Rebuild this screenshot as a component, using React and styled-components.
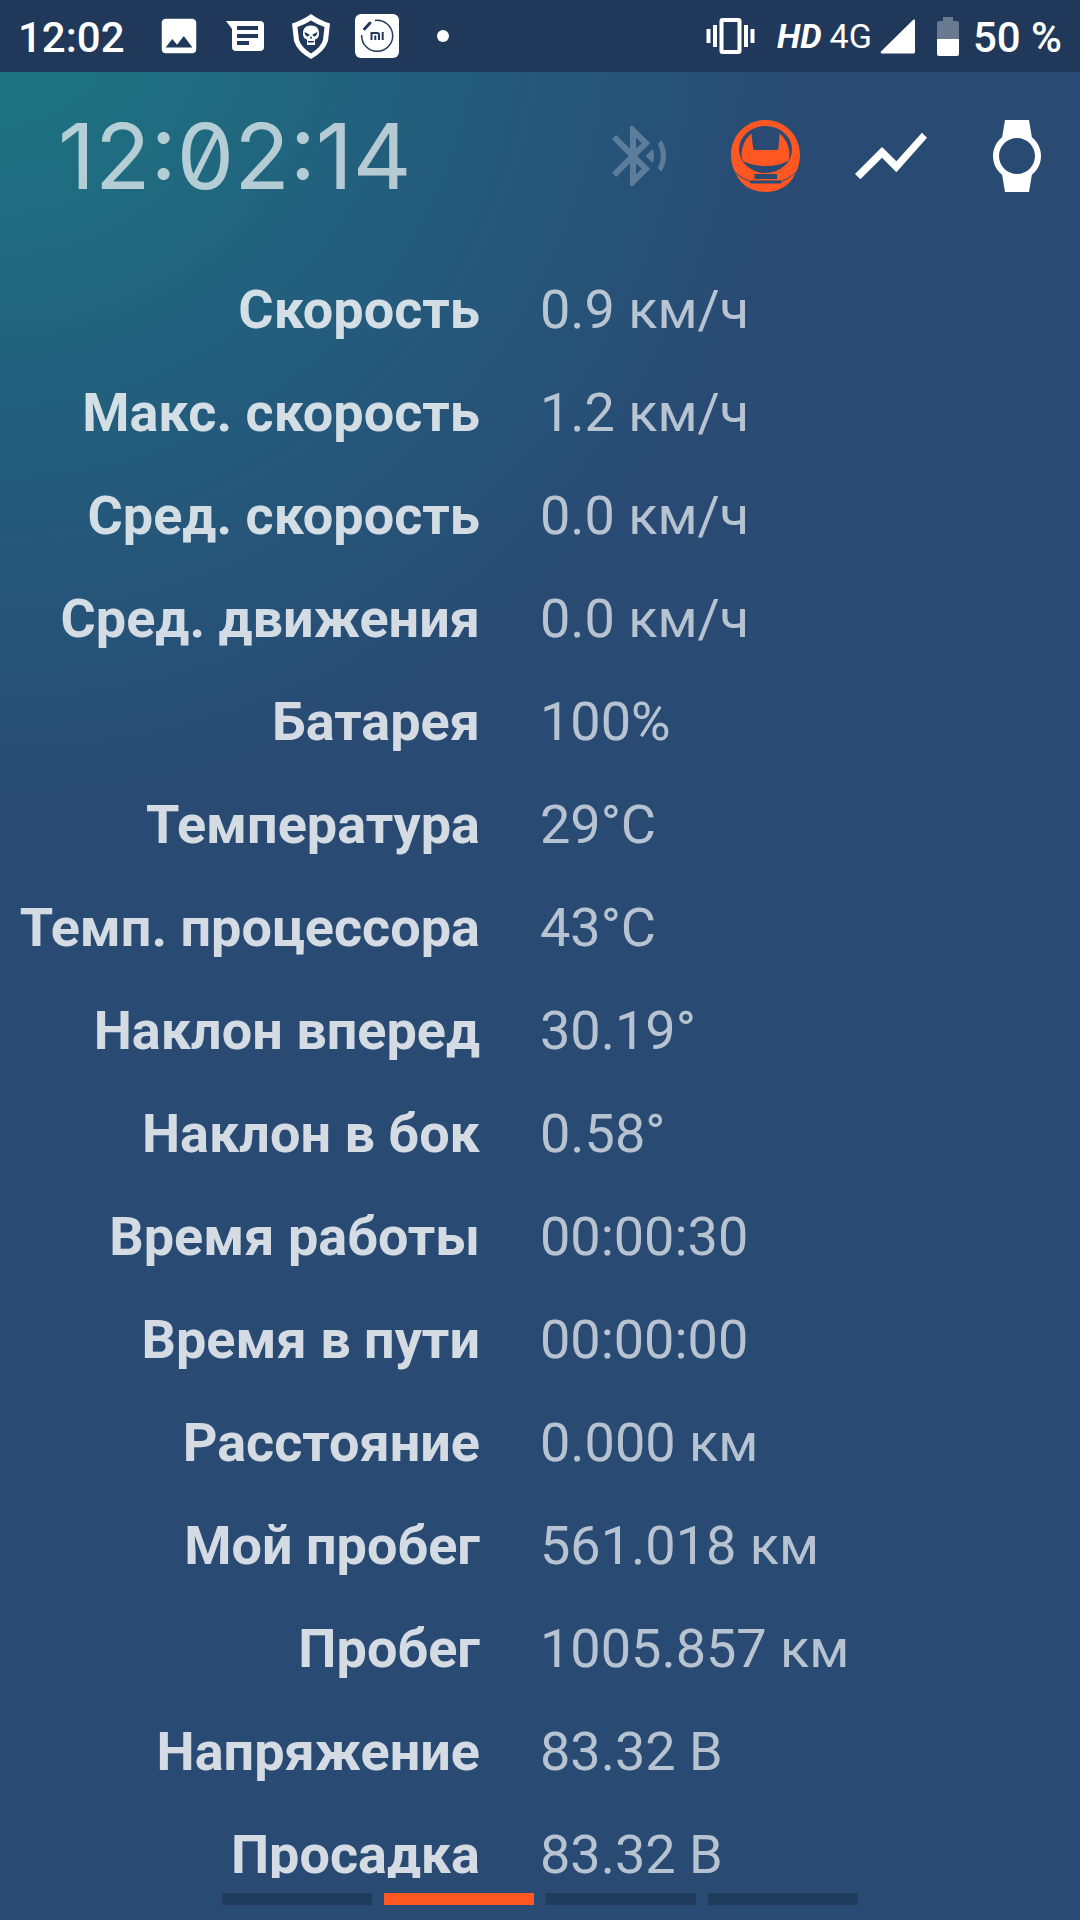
import React, { useState } from "react";
import styled, { createGlobalStyle } from "styled-components";

const GlobalStyle = createGlobalStyle`
  * {
    box-sizing: border-box;
  }
  body {
    margin: 0;
    background-color: #294b73;
    font-family: Roboto, "Liberation Sans", sans-serif;
  }
`;

const Screen = styled.div`
  display: flex;
  flex-direction: column;
  height: 100vh;
  overflow: hidden;
`;

const StatusBar = styled.header`
  display: flex;
  align-items: center;
  justify-content: space-between;
  height: 72px;
  flex-shrink: 0;
  padding: 0 18px;
  background-color: #20395a;
  color: #fff;
`;

const StatusGroup = styled.div`
  display: flex;
  align-items: center;
  gap: ${({ $gap }) => $gap}px;
`;

const StatusText = styled.span`
  padding-top: 3px;
  font-size: 42px;
  font-weight: 500;
  line-height: 48px;
`;

const NetworkText = styled.span`
  font-size: 34px;
  font-weight: ${({ $bold }) => ($bold ? 700 : 400)};
  font-style: ${({ $bold }) => ($bold ? "italic" : "normal")};
  line-height: 40px;
`;

const Notifications = styled.div`
  display: grid;
  grid-auto-flow: column;
  grid-auto-columns: 66px;
  align-items: center;
  justify-items: center;
`;

const Dot = styled.span`
  width: 12px;
  height: 12px;
  border-radius: 50%;
  background-color: #fff;
`;

const Content = styled.div`
  display: flex;
  flex-direction: column;
  flex: 1;
  min-height: 0;
  background: radial-gradient(circle 800px at 0 -72px, #1c7882, #245a7c 62%, #294b73);
`;

const Toolbar = styled.div`
  display: flex;
  align-items: center;
  justify-content: space-between;
  padding: 28px 27px 30px 58px;
`;

const Clock = styled.time`
  font-family: Inter, Roboto, sans-serif;
  font-size: 91px;
  line-height: 112px;
  font-feature-settings: "zero";
  color: rgba(255, 255, 255, 0.67);
`;

const Actions = styled.nav`
  display: flex;
  gap: 54px;
`;

const IconButton = styled.button`
  display: flex;
  padding: 0;
  border: 0;
  background: none;
  color: ${({ $color }) => $color || "#fff"};
  cursor: pointer;
`;

const Stats = styled.dl`
  flex: 1;
  min-height: 0;
  margin: 16px 0 0;
  overflow-y: auto;
  scrollbar-width: none;
`;

const StatRow = styled.div`
  display: grid;
  grid-template-columns: 1fr 1fr;
  padding: 20px 0;
  font-size: 54px;
  line-height: 63px;
  white-space: nowrap;
`;

const StatLabel = styled.dt`
  padding-right: 60px;
  font-weight: 700;
  text-align: right;
  color: rgba(255, 255, 255, 0.8);
`;

const StatValue = styled.dd`
  margin: 0;
  color: rgba(255, 255, 255, 0.67);
`;

const Pager = styled.div`
  display: flex;
  justify-content: center;
  gap: 12px;
  padding: 15px 0;
`;

const PageTab = styled.button`
  width: 150px;
  height: 12px;
  padding: 0;
  border: 0;
  background-color: ${({ $active }) => ($active ? "#ff5722" : "#203c5c")};
  cursor: pointer;
`;

const stats = [
  { label: "Скорость", value: "0.9 км/ч" },
  { label: "Макс. скорость", value: "1.2 км/ч" },
  { label: "Сред. скорость", value: "0.0 км/ч" },
  { label: "Сред. движения", value: "0.0 км/ч" },
  { label: "Батарея", value: "100%" },
  { label: "Температура", value: "29°C" },
  { label: "Темп. процессора", value: "43°C" },
  { label: "Наклон вперед", value: "30.19°" },
  { label: "Наклон в бок", value: "0.58°" },
  { label: "Время работы", value: "00:00:30" },
  { label: "Время в пути", value: "00:00:00" },
  { label: "Расстояние", value: "0.000 км" },
  { label: "Мой пробег", value: "561.018 км" },
  { label: "Пробег", value: "1005.857 км" },
  { label: "Напряжение", value: "83.32 В" },
  { label: "Просадка", value: "83.32 В" },
];

const pages = ["Спидометр", "Параметры", "События", "Поездки"];

function PictureIcon() {
  return (
    <svg width="46" height="46" viewBox="0 0 24 24" fill="currentColor">
      <path d="M21 19V5c0-1.100-.9-2-2-2H5c-1.100 0-2 .9-2 2v14c0 1.100.9 2 2 2h14c1.100 0 2-.9 2-2zM8.500 13.500l2.500 3.010L14.500 12l4.500 6H5l3.500-4.500z" />
    </svg>
  );
}

function MessageIcon() {
  return (
    <svg width="38" height="32" viewBox="0 0 38 32" fill="currentColor">
      <path
        fillRule="evenodd"
        d="M0 1h34q4 0 4 4v22q0 4-4 4H10q-4 0-4-4V9zM11 6v4h21V6zm0 8v4h21v-4zm0 7v4h12v-4z"
      />
    </svg>
  );
}

function ShieldIcon() {
  return (
    <svg width="38" height="45" viewBox="0 0 38 45" fill="currentColor" fillRule="evenodd">
      <path d="M19 0Q11 6 0 9.500L2 27Q5 37 19 45Q33 37 36 27L38 9.500Q27 6 19 0zM19 6.500Q26 11 32.500 13L31 26Q29 33 19 39.500Q9 33 7 26L5.500 13Q12 11 19 6.500z" />
      <path d="M19 11.500c-5.500 0-8 3.500-8 7.500 0 3 .5 5.500 4 6.500V31h8v-5.500c3.500-1 4-3.500 4-6.500 0-4-2.500-7.500-8-7.500zM12.500 18l5 2.500c0 3-4.500 3-5-2.500zm13 0l-5 2.500c0 3 4.500 3 5-2.500zM19 22l-1.500 2.500h3zM16 27v1.500h6V27z" />
    </svg>
  );
}

function MiIcon() {
  return (
    <svg width="44" height="44" viewBox="0 0 44 44">
      <rect width="44" height="44" rx="6" fill="#fff" />
      <g fill="none" stroke="#20395a">
        <path d="M20 6.500A15.500 15.500 0 1 1 6.700 21" strokeWidth="1.500" />
        <path d="M9.500 15L15 9" strokeWidth="3" strokeLinecap="round" />
        <path d="M16.500 26v-7h5.500q2 0 2 2v5M20.300 21.500V26M27.700 18v8" strokeWidth="2" />
      </g>
    </svg>
  );
}

function VibrateIcon() {
  return (
    <svg width="49" height="38" viewBox="0 0 49 38">
      <rect x="15.500" y="3" width="18" height="32" rx="1" fill="none" stroke="currentColor" strokeWidth="4" />
      <path d="M2.500 12v14M9 8v22M40 8v22M46.500 12v14" stroke="currentColor" strokeWidth="4" />
    </svg>
  );
}

function SignalIcon() {
  return (
    <svg width="35" height="35" viewBox="0 0 35 35" fill="currentColor">
      <path d="M33.500 0.500Q35 0 35 1.500V33q0 1.500-1.500 1.500H1.500Q0 34 1 32.500z" />
    </svg>
  );
}

function BatteryIcon() {
  return (
    <svg width="22" height="39" viewBox="0 0 22 39" fill="currentColor">
      <path d="M6 0h10v4h4q2 0 2 2v16H0V6q0-2 2-2h4z" opacity="0.33" />
      <path d="M0 22h22v15q0 2-2 2H2q-2 0-2-2z" />
    </svg>
  );
}

function BluetoothIcon() {
  return (
    <svg width="72" height="72" viewBox="0 0 24 24" fill="currentColor">
      <path d="M14.240 12.010l2.320 2.320c.28-.72.440-1.510.440-2.330 0-.82-.160-1.590-.430-2.310l-2.330 2.320zm5.290-5.300l-1.260 1.260c.63 1.210.98 2.570.98 4.020s-.36 2.820-.98 4.020l1.200 1.200c.97-1.540 1.540-3.360 1.540-5.310-.010-1.890-.550-3.670-1.480-5.190zm-3.820 1L10 2H9v7.590L4.410 5 3 6.410 8.590 12 3 17.590 4.410 19 9 14.410V22h1l5.710-5.710-4.300-4.290 4.300-4.290zM11 5.830l1.880 1.880L11 9.590V5.830zm1.880 10.460L11 18.170v-3.760l1.880 1.880z" />
    </svg>
  );
}

// monowheel: shell ring, visor, and the foot plate at the bottom
function WheelIcon() {
  return (
    <svg width="72" height="72" viewBox="0 0 72 72">
      <path
        d="M36.500 0C56 0 71 15.500 71 35Q71 45 66 54C61 66 49 72 36.500 72S12 66 7 54Q2 45 2 35C2 15.500 17 0 36.500 0z"
        fill="currentColor"
      />
      <ellipse cx="36.500" cy="29.500" rx="26.500" ry="23.500" fill="#294b73" />
      <path
        d="M22.500 13.500L24 28Q24 30 26 30H47.500Q49.500 30 49.500 28L50.500 13.500Q59 20 60.500 33Q60.500 38 59 41Q50 46 36.500 46T14 41Q12.500 38 12.500 33Q14 20 22.500 13.500z"
        fill="currentColor"
      />
      <path d="M25.500 54h22.500v5H25.500zM22 60.500h29.500q1 0 1 1.500t-1 1.500H22q-1 0-1-1.500t1-1.500z" fill="#294b73" />
      <path d="M6.500 52.500Q12 58.500 21.500 61.500M66.500 52.500Q61 58.500 52 61.500" fill="none" stroke="#294b73" />
    </svg>
  );
}

function ChartIcon() {
  return (
    <svg width="72" height="72" viewBox="2 2 20 20" fill="currentColor">
      <path d="M3.500 18.490l6-6.010 4 4L22 6.920l-1.410-1.410-7.090 7.970-4-4L2 16.990z" />
    </svg>
  );
}

function WatchIcon() {
  return (
    <svg width="72" height="72" viewBox="0 0 24 24" fill="currentColor">
      <path d="M20 12c0-2.540-1.190-4.810-3.040-6.270L16 0H8l-.95 5.730C5.190 7.190 4 9.450 4 12s1.190 4.810 3.050 6.270L8 24h8l.96-5.730C18.810 16.810 20 14.540 20 12zM6 12c0-3.310 2.690-6 6-6s6 2.690 6 6-2.690 6-6 6-6-2.690-6-6z" />
    </svg>
  );
}

export default function App() {
  const [page, setPage] = useState(1);

  return (
    <Screen>
      <GlobalStyle />
      <StatusBar>
        <StatusGroup $gap={21}>
          <StatusText>12:02</StatusText>
          <Notifications>
            <PictureIcon />
            <MessageIcon />
            <ShieldIcon />
            <MiIcon />
            <Dot />
          </Notifications>
        </StatusGroup>
        <StatusGroup $gap={22}>
          <VibrateIcon />
          <StatusGroup $gap={8}>
            <NetworkText $bold>HD</NetworkText>
            <NetworkText>4G</NetworkText>
            <SignalIcon />
          </StatusGroup>
          <StatusGroup $gap={14}>
            <BatteryIcon />
            <StatusText>50 %</StatusText>
          </StatusGroup>
        </StatusGroup>
      </StatusBar>
      <Content>
        <Toolbar>
          <Clock>12:02:14</Clock>
          <Actions>
            <IconButton aria-label="Bluetooth" $color="rgba(255, 255, 255, 0.25)">
              <BluetoothIcon />
            </IconButton>
            <IconButton aria-label="Колесо" $color="#ff5722">
              <WheelIcon />
            </IconButton>
            <IconButton aria-label="График">
              <ChartIcon />
            </IconButton>
            <IconButton aria-label="Часы">
              <WatchIcon />
            </IconButton>
          </Actions>
        </Toolbar>
        <Stats>
          {stats.map(({ label, value }) => (
            <StatRow key={label}>
              <StatLabel>{label}</StatLabel>
              <StatValue>{value}</StatValue>
            </StatRow>
          ))}
        </Stats>
        <Pager>
          {pages.map((name, i) => (
            <PageTab
              key={name}
              aria-label={name}
              $active={i === page}
              onClick={() => setPage(i)}
            />
          ))}
        </Pager>
      </Content>
    </Screen>
  );
}
